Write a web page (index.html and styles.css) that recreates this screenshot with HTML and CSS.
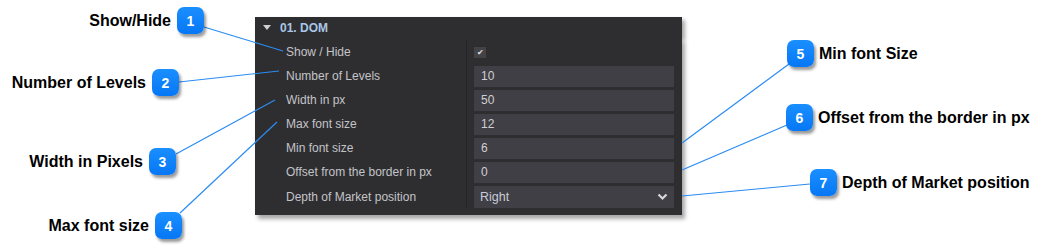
FILE: index.html
```html
<!DOCTYPE html>
<html lang="en">

<head>
    <meta charset="UTF-8">
    <title>DOM Settings</title>
    <link rel="stylesheet" href="styles.css">
</head>

<body>
    <div class="canvas">
        <div class="panel">
            <div class="panel-header">
                <span class="arrow"></span>
                <span class="panel-title">01. DOM</span>
            </div>
            <div class="panel-body">
                <div class="labels">
                    <div class="row">Show / Hide</div>
                    <div class="row">Number of Levels</div>
                    <div class="row">Width in px</div>
                    <div class="row">Max font size</div>
                    <div class="row">Min font size</div>
                    <div class="row">Offset from the border in px</div>
                    <div class="row row-select">Depth of Market position</div>
                </div>
                <div class="values">
                    <div class="row"><span class="checkbox">&#10004;</span></div>
                    <div class="row"><div class="field">10</div></div>
                    <div class="row"><div class="field">50</div></div>
                    <div class="row"><div class="field">12</div></div>
                    <div class="row"><div class="field">6</div></div>
                    <div class="row"><div class="field">0</div></div>
                    <div class="row row-select">
                        <div class="field select">Right
                            <svg class="chevron" width="11" height="8" viewBox="0 0 11 8">
                                <path d="M1.5 1.5 L5.5 5.5 L9.5 1.5" fill="none" stroke="#d8d8dc" stroke-width="2.2"/>
                            </svg>
                        </div>
                    </div>
                </div>
            </div>
        </div>

        <!-- callout lines -->
        <svg class="lines" width="1045" height="252">
            <g stroke="#2b8cf2" stroke-width="1.2" fill="none">
                <line x1="204" y1="27" x2="283" y2="51"/>
                <line x1="179" y1="82" x2="279" y2="71"/>
                <line x1="176" y1="154" x2="275" y2="100"/>
                <line x1="180" y1="213" x2="277" y2="122"/>
                <line x1="789" y1="64" x2="682" y2="143"/>
                <line x1="787" y1="125" x2="682" y2="170"/>
                <line x1="810" y1="184" x2="682" y2="196"/>
            </g>
        </svg>

        <div class="callout left c1"><span class="text">Show/Hide</span><span class="badge">1</span></div>
        <div class="callout left c2"><span class="text">Number of Levels</span><span class="badge">2</span></div>
        <div class="callout left c3"><span class="text">Width in Pixels</span><span class="badge">3</span></div>
        <div class="callout left c4"><span class="text">Max font size</span><span class="badge">4</span></div>
        <div class="callout c5"><span class="badge">5</span><span class="text">Min font Size</span></div>
        <div class="callout c6"><span class="badge">6</span><span class="text">Offset from the border in px</span></div>
        <div class="callout c7"><span class="badge">7</span><span class="text">Depth of Market position</span></div>
    </div>
</body>

</html>
```

FILE: styles.css
```css
body {
    margin: 0;
    padding: 0;
    background-color: #fff;
    font-family: "Liberation Sans", Arial, sans-serif;
}

.canvas {
    position: relative;
    width: 1045px;
    height: 252px;
    overflow: hidden;
}

.panel {
    margin-left: 255px;
    padding-top: 17px;
    width: 427px;
}

.panel-header,
.panel-body {
    background-color: #2e2e31;
}

.panel-header {
    height: 21px;
    display: flex;
    align-items: center;
    padding-left: 8px;
    box-shadow: 3px 3px 4px rgba(0, 0, 0, 0.35);
}

.arrow {
    width: 0;
    height: 0;
    border-left: 4px solid transparent;
    border-right: 4px solid transparent;
    border-top: 5px solid #d0d0d4;
    margin-right: 9px;
}

.panel-title {
    color: #a9c6e6;
    font-size: 12px;
    font-weight: bold;
}

.panel-body {
    display: flex;
    padding: 2px 0 8px 0;
    height: 177px;
    box-sizing: border-box;
    box-shadow: 3px 4px 4px rgba(0, 0, 0, 0.35);
}

.labels {
    width: 212px;
    padding-left: 31px;
    border-right: 1px solid #242427;
    box-sizing: border-box;
}

.values {
    padding-left: 7px;
    width: 200px;
}

.row {
    height: 24px;
    display: flex;
    align-items: center;
    color: #c4c4c8;
    font-size: 12px;
}

.row-select {
    height: 25px;
}

.checkbox {
    width: 12px;
    height: 11px;
    background-color: #434247;
    color: #e0e0e4;
    font-size: 8px;
    line-height: 11px;
    text-align: center;
}

.field {
    width: 200px;
    height: 21px;
    background-color: #403f45;
    color: #d0d0d4;
    font-size: 12px;
    line-height: 21px;
    padding-left: 7px;
    box-sizing: border-box;
}

.select {
    height: 22px;
    line-height: 22px;
    padding-left: 6px;
    font-size: 12.5px;
    display: flex;
    justify-content: space-between;
    align-items: center;
    padding-right: 6px;
    color: #c8ccd8;
}

.lines {
    position: absolute;
    left: 0;
    top: 0;
}

.callout {
    position: absolute;
    display: flex;
    align-items: center;
}

.callout .text {
    font-size: 16px;
    font-weight: bold;
    color: #000;
    white-space: nowrap;
}

.badge {
    width: 27px;
    height: 27px;
    border-radius: 7px;
    background: linear-gradient(#1a8fff, #0677f5);
    box-shadow: 2px 3px 3px rgba(0, 0, 0, 0.4);
    color: #fff;
    font-size: 14px;
    font-weight: bold;
    display: flex;
    align-items: center;
    justify-content: center;
}

.left .text {
    margin-right: 6px;
}

.callout .badge + .text {
    margin-left: 5px;
}

.c1 { right: 841px; top: 7px; }
.c2 { right: 866px; top: 69px; }
.c3 { right: 869px; top: 148px; }
.c4 { right: 863px; top: 212px; }
.c5 { left: 787px; top: 40px; }
.c6 { left: 786px; top: 104px; }
.c7 { left: 810px; top: 169px; }
```
